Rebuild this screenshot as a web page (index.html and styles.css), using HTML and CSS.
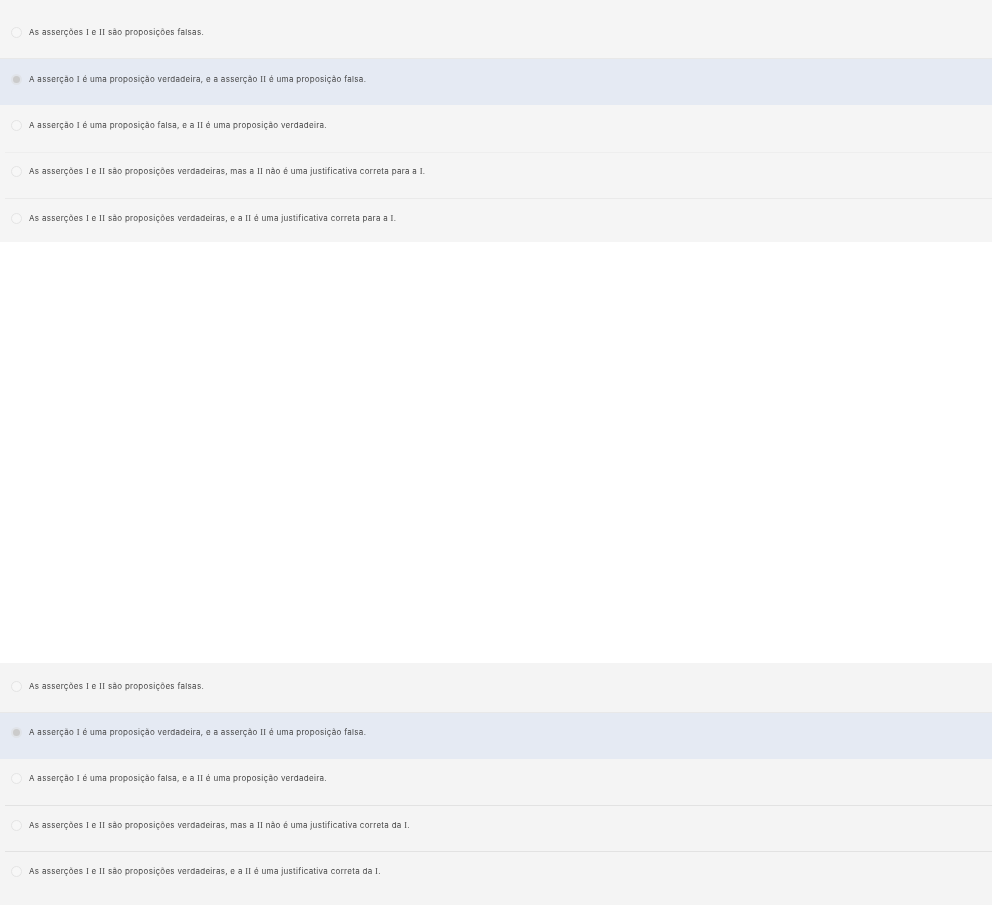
FILE: index.html
```html
<!DOCTYPE html>
<html lang="pt">
<head>
<meta charset="utf-8">
<title>Questões</title>
<link rel="stylesheet" href="styles.css">
</head>
<body>
<main class="page">
  <ul class="options options-top">
    <li class="option option-first"><span class="radio"></span><p>As asserções <i>I</i> e <i>II</i> são proposições falsas.</p></li>
    <li class="option selected"><span class="radio"></span><p>A asserção <i>I</i> é uma proposição verdadeira, e a asserção <i>II</i> é uma proposição falsa.</p></li>
    <li class="option"><span class="radio"></span><p>A asserção <i>I</i> é uma proposição falsa, e a <i>II</i> é uma proposição verdadeira.</p></li>
    <li class="option ruled"><span class="radio"></span><p>As asserções <i>I</i> e <i>II</i> são proposições verdadeiras, mas a <i>II</i> não é uma justificativa correta para a <i>I</i>.</p></li>
    <li class="option ruled option-last"><span class="radio"></span><p>As asserções <i>I</i> e <i>II</i> são proposições verdadeiras, e a <i>II</i> é uma justificativa correta para a <i>I</i>.</p></li>
  </ul>
  <ul class="options options-bottom">
    <li class="option option-first"><span class="radio"></span><p>As asserções <i>I</i> e <i>II</i> são proposições falsas.</p></li>
    <li class="option selected"><span class="radio"></span><p>A asserção <i>I</i> é uma proposição verdadeira, e a asserção <i>II</i> é uma proposição falsa.</p></li>
    <li class="option"><span class="radio"></span><p>A asserção <i>I</i> é uma proposição falsa, e a <i>II</i> é uma proposição verdadeira.</p></li>
    <li class="option ruled strong"><span class="radio"></span><p>As asserções <i>I</i> e <i>II</i> são proposições verdadeiras, mas a <i>II</i> não é uma justificativa correta da <i>I</i>.</p></li>
    <li class="option ruled strong option-end"><span class="radio"></span><p>As asserções <i>I</i> e <i>II</i> são proposições verdadeiras, e a <i>II</i> é uma justificativa correta da <i>I</i>.</p></li>
  </ul>
</main>
</body>
</html>
```
FILE: styles.css
```css
* { box-sizing: border-box; }
html, body { margin: 0; padding: 0; background: #fff; }
.page { width: 992px; height: 905px; overflow: hidden; font-family: Inter, "Liberation Sans", sans-serif; }
.options { list-style: none; margin: 0; padding: 0; background: #f5f5f5; filter: blur(0.35px); }
.options-top { height: 242px; }
.options-bottom { height: 242px; margin-top: 421px; background: #f4f4f4; }
.option { height: 46.3px; display: flex; align-items: flex-start; gap: 7px; padding: 14.5px 0 0 11px; position: relative; }
.option-first { height: 59px; padding-top: 26.5px; border-bottom: 1px solid #e8e8e8; }
.options-bottom .option-first { height: 49.5px; padding-top: 17.5px; }
.option-last { height: 44px; padding-top: 15px; }
.option-end { height: 54px; }
.option p { margin: 0; font-size: 8px; line-height: 11px; letter-spacing: 0.3px; color: #484848; white-space: nowrap; }
.option i { font-family: "Liberation Serif", serif; font-style: normal; font-size: 8.5px; }
.radio { width: 11px; height: 11px; border-radius: 50%; border: 1px solid #e4e4e4; background: #f7f7f7; flex: none; }
.selected { background: #e5eaf3; }
.selected .radio { background: #cbcbcb; border: 2px solid #e0e3e8; }
.ruled::before { content: ""; position: absolute; left: 5px; right: 0; top: 0; height: 1px; background: #eeeeee; }
.option-last::before { height: 1.5px; background: #eaeaea; }
.strong::before { background: #e2e2e2; }
```
